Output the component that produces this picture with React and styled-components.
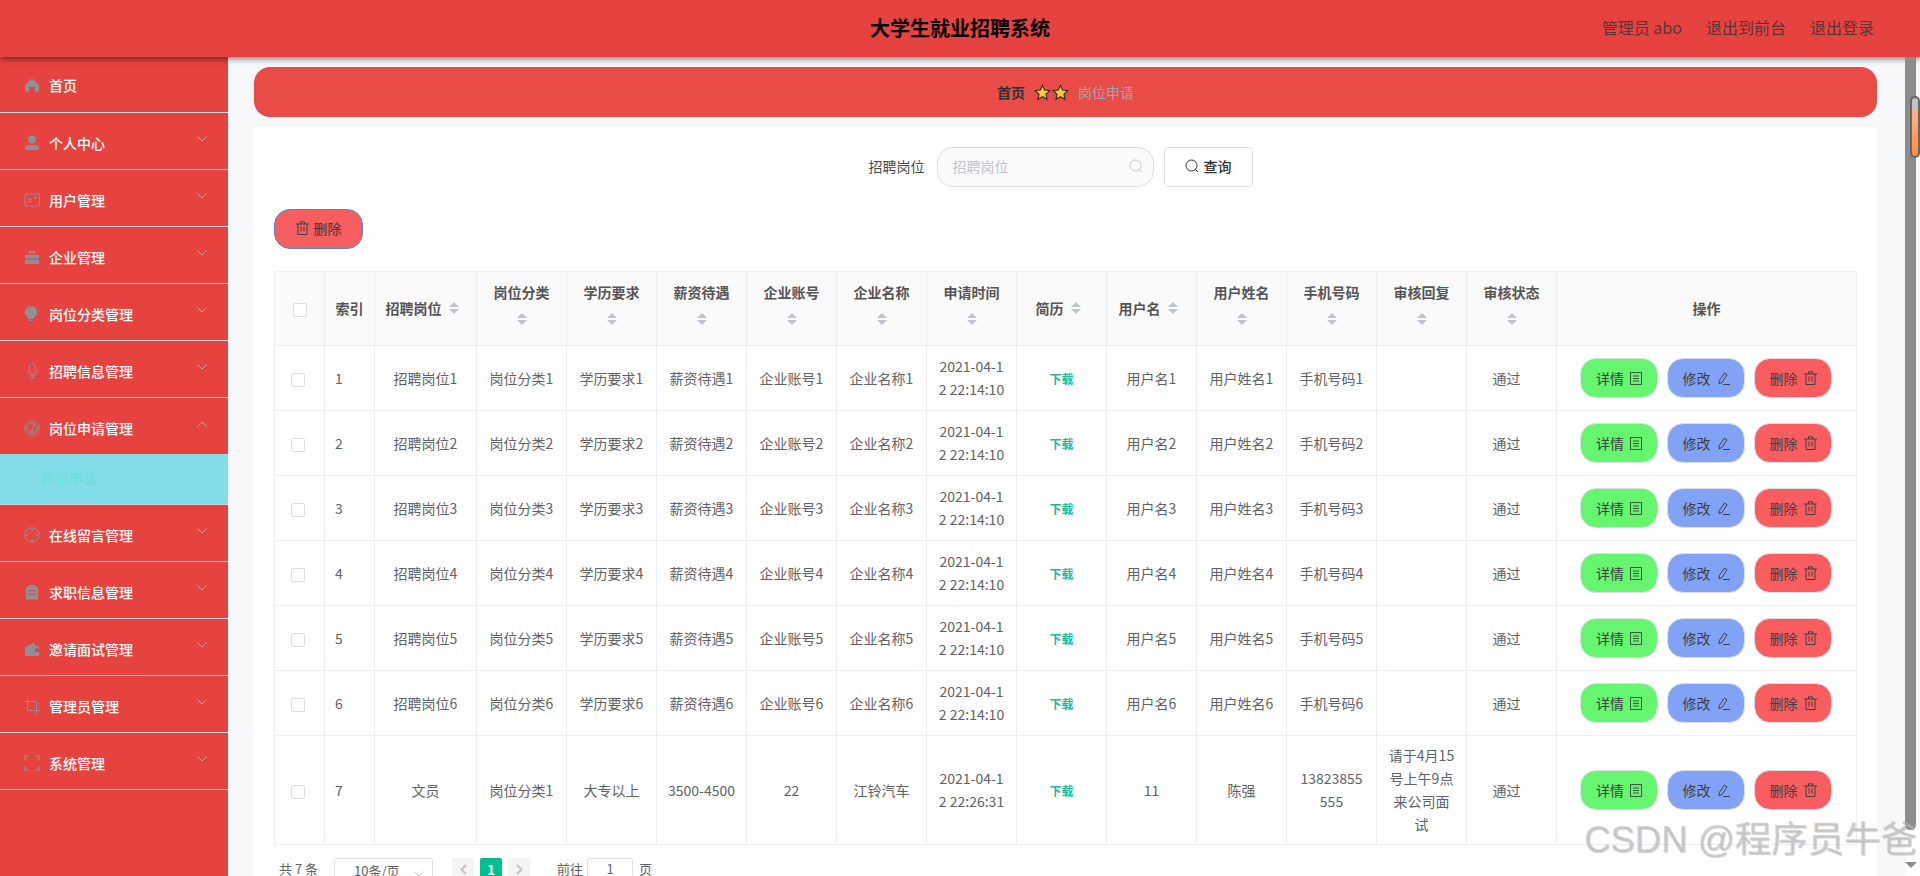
import React from 'react';
import styled, { createGlobalStyle } from 'styled-components';

const Global = createGlobalStyle`
  html, body { margin: 0; padding: 0; height: 100%; overflow: hidden; }
  body { font-family: "Noto Sans CJK SC", "Noto Sans", sans-serif; font-size: 14px; color: #606266; }
  * { box-sizing: border-box; }
`;

const Page = styled.div`
  position: relative; width: 1920px; height: 876px; overflow: hidden;
  display: flex; flex-direction: column; background: #f7f8fa;
`;
const TopBar = styled.header`
  position: relative; z-index: 3; flex: 0 0 57px; height: 57px; background: #e64340;
  box-shadow: 0 2px 6px rgba(0,0,0,.5);
  display: grid; grid-template-columns: 1fr auto 1fr; align-items: start;
`;
const Title = styled.h1`
  grid-column: 2; margin: 0; font-size: 20px; line-height: 55px; font-weight: 700; color: #000;
`;
const TopLinks = styled.nav`
  grid-column: 3; justify-self: end; display: flex; gap: 24px; padding-right: 46px; font-size: 16px; color: #5a3535; line-height: 55px;
`;
const Body = styled.div`
  flex: 1; display: flex; min-height: 0;
`;
const Side = styled.aside`
  flex: 0 0 228px; background: #e64340; display: flex; flex-direction: column;
`;
const NavRow = styled.div`
  height: ${p => p.$h}px; flex: 0 0 ${p => p.$h}px; padding: ${p => p.$home ? 0 : 3}px 0 0 24px;
  display: flex; align-items: center; gap: 9px; color: #fff; font-weight: 500; font-size: 14px;
  border-bottom: ${p => p.$open ? 'none' : '1px solid #cfd3d6'};
  svg.nav { flex: 0 0 16px; color: #8a9198; }
`;
const Chevron = styled.svg`
  margin-left: auto; margin-right: 21px; margin-top: -8px; width: 10px; height: 6px;
  fill: none; stroke: #c9a7a7; stroke-width: 1;
`;
const SubRow = styled.div`
  height: 51px; flex: 0 0 51px; padding: 0 0 2px 41px; background: #82dde9; color: #6be0da;
  display: flex; align-items: center; font-size: 14px; font-weight: 500; border-bottom: 1px solid #cfd3d6;
`;
const Main = styled.main`
  flex: 1; min-width: 0; padding: 10px 43px 0 26px; display: flex; flex-direction: column; gap: 10px;
`;
const Crumb = styled.div`
  flex: 0 0 50px; border-radius: 16px; background: #e94b47;
  display: flex; align-items: center; justify-content: center; font-size: 14px;
`;
const CrumbHome = styled.span` color: #303133; font-weight: 600; `;
const CrumbNow = styled.span` color: #97a8be; `;
const Stars = styled.span` display: inline-flex; gap: 1px; margin: 0 9px 0 9px; `;
const Card = styled.section`
  flex: 1; background: #fff; padding: 20px 20px 0; display: flex; flex-direction: column;
`;
const SearchRow = styled.div`
  flex: 0 0 40px; display: flex; justify-content: center; align-items: center; padding-right: 10px;
`;
const SearchLabel = styled.label` color: #4c4c4c; margin-right: 12px; font-size: 14px; padding-bottom: 2px; `;
const SearchBox = styled.div`
  width: 217px; height: 40px; border: 1px solid #dcdfe6; border-radius: 16px; background: #fafafb;
  display: flex; align-items: center; justify-content: space-between; padding: 0 10px 2px 15px;
  color: #c0c4cc; font-size: 14px;
`;
const SearchButton = styled.button`
  margin-left: 10px; width: 89px; height: 40px; border: 1px solid #dcdfe6; border-radius: 4px; background: #fff;
  font: 500 14px "Noto Sans CJK SC", sans-serif; color: #303133; display: flex; align-items: center; justify-content: center; gap: 5px;
  padding: 0 0 2px;
`;
const BulkDelete = styled.button`
  align-self: flex-start; margin: 22px 0; width: 89px; height: 40px; border: 1px solid #5c82d6; border-radius: 16px;
  background: #f65e5f; color: #4a3434; font: 400 14px "Noto Sans CJK SC", sans-serif;
  display: flex; align-items: center; justify-content: center; gap: 5px; padding: 0 0 2px;
`;
const Table = styled.table`
  border-collapse: collapse; table-layout: fixed; width: 1583px; font-size: 14px; color: #606266;
`;
const Th = styled.th`
  height: 74px; background: #fafafa; border: 1px solid #ebeef5; padding: 0 10px; font-weight: 700; color: #555;
  line-height: 23px; text-align: center; word-break: break-all;
`;
const Td = styled.td`
  height: 65px; border: 1px solid #ebeef5; padding: 8px ${p => p.$shift ? 20 : 10}px 8px 10px; line-height: 23px;
  text-align: ${p => p.$left ? 'left' : 'center'}; word-break: break-all;
`;
const Box = styled.span`
  display: inline-block; width: 14px; height: 14px; border: 1px solid #dcdfe6; border-radius: 2px; background: #fff;
  vertical-align: middle; margin-left: ${p => p.$head ? 0 : -3}px;
`;
const Sort = styled.span`
  display: ${p => p.$stacked ? 'block' : 'inline-block'}; width: 24px; height: 12px; vertical-align: 0;
  ${p => p.$stacked ? 'margin: 9px auto 11px;' : ''}
  position: relative;
  &::before, &::after { content: ""; position: absolute; left: 7px; border-left: 5px solid transparent; border-right: 5px solid transparent; }
  &::before { top: 0; border-bottom: 5px solid #c0c4cc; }
  &::after { bottom: 0; border-top: 5px solid #c0c4cc; }
`;
const Download = styled.span` color: #1abc9c; font-size: 12px; font-weight: 600; `;
const Actions = styled.div` display: flex; justify-content: center; gap: 9px; padding-right: 1px; `;
const ActionButton = styled.button`
  width: 78px; height: 40px; border: 1px solid #dcdfe6; border-radius: 16px; background: ${p => p.$bg};
  color: #3d4043; font: 400 14px "Noto Sans CJK SC", sans-serif; padding: 0;
  display: flex; align-items: center; justify-content: center; gap: 6px;
`;
const Pager = styled.div`
  margin-top: 13px; padding-left: 5px; display: flex; align-items: flex-start; font-size: 13px; color: #606266;
`;
const PagerText = styled.span` line-height: 22px; margin: ${p => p.$m}; `;
const PageSize = styled.div`
  width: 99px; height: 28px; margin-left: 16px; border: 1px solid #dcdfe6; border-radius: 3px; padding: 0 0 0 19px; line-height: 24px;
  display: flex; justify-content: space-between;
  svg { margin: 12px 8px 0 0; width: 10px; height: 6px; fill: none; stroke: #c0c4cc; }
`;
const PageBtn = styled.span`
  width: 22px; height: 28px; margin-left: ${p => p.$ml}px; display: flex; align-items: flex-start; justify-content: center;
  padding-top: ${p => p.$on ? 0 : 6}px; line-height: 24px;
  border-radius: 2px; background: ${p => p.$on ? '#00bf8f' : '#f4f4f5'}; color: ${p => p.$on ? '#fff' : '#c0c4cc'}; font-weight: 700;
  svg { width: 7px; height: 11px; fill: none; stroke: #c0c4cc; stroke-width: 2; }
`;
const JumpInput = styled.span`
  width: 46px; height: 28px; margin: 0 6px 0 4px; border: 1px solid #dcdfe6; border-radius: 3px; text-align: center; line-height: 20px;
`;
const ScrollTrack = styled.div`
  position: absolute; z-index: 4; left: 1905px; top: 57px; width: 11px; height: 773px; background: #8c8c8c;
  border-radius: 0 0 6px 6px;
`;
const ScrollThumb = styled.div`
  position: absolute; z-index: 5; left: 1910px; top: 96px; width: 10px; height: 62px; border: 2px solid #666; border-radius: 5px;
  background: linear-gradient(#c2c2c2 0 18%, #ffb37d 25%, #ff8d3f 100%);
`;
const ScrollEnd = styled.div`
  position: absolute; z-index: 1; left: 1905px; top: 830px; right: 0; bottom: 0; background: #fff;
`;
const ScrollArrow = styled.div`
  position: absolute; z-index: 4; left: 1905px; top: 862px; width: 0; height: 0;
  border-left: 6px solid transparent; border-right: 6px solid transparent; border-top: 6px solid #8c8c8c;
`;
const Watermark = styled.div`
  position: absolute; z-index: 6; right: 3px; top: 818px; font: 36.5px/44px "Liberation Sans", "Noto Sans CJK SC", sans-serif;
  color: rgba(190,190,190,.62); text-shadow: 1px 1px 1px rgba(120,120,120,.35); white-space: nowrap;
`;

const Ico = ({ children }) => <svg className="nav" width="16" height="16" viewBox="0 0 16 16">{children}</svg>;
const line = { fill: 'none', stroke: 'currentColor', strokeWidth: 1 };
const icons = {
  home: <path fill="currentColor" d="M8 1.5 15 8v6.5h-4.5V10h-5v4.5H1V8z" />,
  user: <g fill="currentColor"><circle cx="8" cy="4.5" r="4" /><path d="M1 15v-2c0-2 2-3 4-3h6c2 0 4 1 4 3v2z" /></g>,
  card: <g {...line}><rect x="1" y="2" width="14.5" height="12" rx="1" /><path d="M3.5 7H8M3.5 9.5H8" /><path d="M10.5 5.5H13" strokeWidth="2" /></g>,
  case: <g fill="currentColor"><path d="M1 6h14v3.5H1zM1 10.5h14V15H1z" /><path d="M5 5V2h6v3H9.6V3.4H6.4V5z" /></g>,
  bulb: <g fill="currentColor"><path fillRule="evenodd" d="M7 .3a6 6 0 0 1 3.500 10.900L9.500 13h-5l-1-1.800A6 6 0 0 1 7 .3z" /><path d="M5 14h4v.9H5z" /></g>,
  mic: <g {...line}><rect x="5.5" y="1" width="6" height="9.5" rx="3" /><path d="M3.5 7.5a5 5 0 0 0 10 0M8.5 12.5v2.5M6 15h5" /></g>,
  gauge: <g {...line}><circle cx="8" cy="8" r="7.2" /><circle cx="8" cy="8" r="5" /><path d="M10 4 8 10" /><circle cx="7.5" cy="11" r="1" /></g>,
  aim: <g {...line}><circle cx="8" cy="8" r="7.2" /><path d="M8 .8v4M8 11v4.2M.8 8h4M11 8h4.2" /></g>,
  clip: <g fill="currentColor"><path fillRule="evenodd" d="M2 2.5h3V1h6v1.500h3v13H2zM4.500 6v1.200h7V6zm0 3.500v1.200h7V9.500z" /></g>,
  wallet: <path fill="currentColor" fillRule="evenodd" d="M1 6 10 2l1.500 3H15v2.500h-4a2 2 0 0 0 0 3.500h4V15H1zM11.500 9a.8.8 0 1 0 0 .1z" />,
  crop: <g {...line}><path d="M3.500 0v12.500H16M0.500 3.500H12.500V16" /></g>,
  full: <g {...line} strokeWidth="1.200"><path d="M1 5V1h4M11 1h4v4M15 11v4h-4M5 15H1v-4" /></g>,
};

const Down = () => <Chevron viewBox="0 0 10 6"><path d="M.5.500 5 5 9.500.500" /></Chevron>;
const Up = () => <Chevron viewBox="0 0 10 6"><path d="M.5 5.500 5 1l4.500 4.500" /></Chevron>;

const nav = [
  ['home', '首页', 56, 'home'],
  ['user', '个人中心', 57], ['card', '用户管理', 57], ['case', '企业管理', 57],
  ['bulb', '岗位分类管理', 57], ['mic', '招聘信息管理', 57],
  ['gauge', '岗位申请管理', 56, 'open'],
  ['aim', '在线留言管理', 57], ['clip', '求职信息管理', 57], ['wallet', '邀请面试管理', 57],
  ['crop', '管理员管理', 57], ['full', '系统管理', 57],
];

const SearchIcon = ({ c = '#c0c4cc' }) => (
  <svg width="14" height="14" viewBox="0 0 14 14" fill="none" stroke={c} strokeWidth="1"><circle cx="6.500" cy="6.500" r="5.500" /><path d="m10.500 10.500 2.500 2.500" /></svg>
);
const Trash = () => (
  <svg width="13" height="14" viewBox="0 0 13 14" fill="none" stroke="#4a3a3a" strokeWidth="1"><path d="M0 3h13M4.500 3V.8h4V3M2 3v10.500h9V3M5 5.500v5M8 5.500v5" /></svg>
);
const Doc = () => (
  <svg width="12" height="13" viewBox="0 0 12 13" fill="none" stroke="#3d5a3d" strokeWidth="1"><rect x=".5" y=".5" width="11" height="12" /><path d="M3 4h6M3 6.500h6M3 9h6" /></svg>
);
const Pencil = () => (
  <svg width="13" height="13" viewBox="0 0 13 13" fill="none" stroke="#3d4043" strokeWidth="1"><path d="M7.500 1 10 2.800 5 10.500l-3 1.200.3-3.200zM6 12.500h7" /></svg>
);
const Star = () => (
  <svg width="17" height="17" viewBox="0 0 16 16"><path fill="#ffc832" stroke="#3a2a20" strokeWidth="1.100" d="m8 1.300 2 4.400 4.800.6-3.500 3.300.9 4.800L8 12l-4.200 2.400.9-4.800L1.200 6.300 6 5.700z" /></svg>
);

const heads = ['招聘岗位', '岗位分类', '学历要求', '薪资待遇', '企业账号', '企业名称', '申请时间', '简历', '用户名', '用户姓名', '手机号码', '审核回复', '审核状态'];
const inlineSort = new Set(['招聘岗位', '简历', '用户名']);
const rows = [1, 2, 3, 4, 5, 6].map(n => ({
  i: n, cells: [`招聘岗位${n}`, `岗位分类${n}`, `学历要求${n}`, `薪资待遇${n}`, `企业账号${n}`, `企业名称${n}`, '2021-04-12 22:14:10'],
  tail: [`用户名${n}`, `用户姓名${n}`, `手机号码${n}`, ''],
}));
rows.push({
  i: 7, cells: ['文员', '岗位分类1', '大专以上', '3500-4500', '22', '江铃汽车', '2021-04-12 22:26:31'],
  tail: ['11', '陈强', '13823855555', '请于4月15号上午9点来公司面试'],
});
const cols = [50, 50, 102, ...Array(12).fill(90), 300];

export default function App() {
  return (
    <Page>
      <Global />
      <TopBar>
        <Title>大学生就业招聘系统</Title>
        <TopLinks><span>管理员 abo</span><span>退出到前台</span><span>退出登录</span></TopLinks>
      </TopBar>
      <Body>
        <Side>
          {nav.map(([ic, label, h, kind]) => (
            <React.Fragment key={label}>
              <NavRow $h={h} $home={kind === 'home'} $open={kind === 'open'}>
                <Ico>{icons[ic]}</Ico>
                <span>{label}</span>
                {kind === 'home' ? null : kind === 'open' ? <Up /> : <Down />}
              </NavRow>
              {kind === 'open' && <SubRow>岗位申请</SubRow>}
            </React.Fragment>
          ))}
        </Side>
        <Main>
          <Crumb>
            <CrumbHome>首页</CrumbHome>
            <Stars><Star /><Star /></Stars>
            <CrumbNow>岗位申请</CrumbNow>
          </Crumb>
          <Card>
            <SearchRow>
              <SearchLabel>招聘岗位</SearchLabel>
              <SearchBox><span>招聘岗位</span><SearchIcon /></SearchBox>
              <SearchButton><SearchIcon c="#303133" />查询</SearchButton>
            </SearchRow>
            <BulkDelete><Trash />删除</BulkDelete>
            <Table>
              <colgroup>{cols.map((w, i) => <col key={i} style={{ width: w }} />)}</colgroup>
              <thead>
                <tr>
                  <Th><Box $head /></Th>
                  <Th>索引</Th>
                  {heads.map(h => (
                    <Th key={h}>{h}<Sort $stacked={!inlineSort.has(h)} /></Th>
                  ))}
                  <Th>操作</Th>
                </tr>
              </thead>
              <tbody>
                {rows.map(r => (
                  <tr key={r.i}>
                    <Td><Box /></Td>
                    <Td $left>{r.i}</Td>
                    {r.cells.map((c, i) => <Td key={i}>{c}</Td>)}
                    <Td><Download>下载</Download></Td>
                    {r.tail.map((c, i) => <Td key={i}>{c}</Td>)}
                    <Td $shift>通过</Td>
                    <Td>
                      <Actions>
                        <ActionButton $bg="#66f56f">详情<Doc /></ActionButton>
                        <ActionButton $bg="#82a3f5">修改<Pencil /></ActionButton>
                        <ActionButton $bg="#f95d5f">删除<Trash /></ActionButton>
                      </Actions>
                    </Td>
                  </tr>
                ))}
              </tbody>
            </Table>
            <Pager>
              <PagerText $m="0">共 7 条</PagerText>
              <PageSize>10条/页<svg viewBox="0 0 10 6"><path d="M.5.500 5 5 9.500.500" /></svg></PageSize>
              <PageBtn $ml={19}><svg viewBox="0 0 7 11"><path d="M6 1 1.500 5.500 6 10" /></svg></PageBtn>
              <PageBtn $ml={6} $on>1</PageBtn>
              <PageBtn $ml={6}><svg viewBox="0 0 7 11"><path d="M1 1l4.500 4.500L1 10" /></svg></PageBtn>
              <PagerText $m="0 0 0 27px">前往</PagerText>
              <JumpInput>1</JumpInput>
              <PagerText $m="0">页</PagerText>
            </Pager>
          </Card>
        </Main>
      </Body>
      <ScrollEnd />
      <ScrollTrack />
      <ScrollThumb />
      <ScrollArrow />
      <Watermark>CSDN @程序员牛爸</Watermark>
    </Page>
  );
}
